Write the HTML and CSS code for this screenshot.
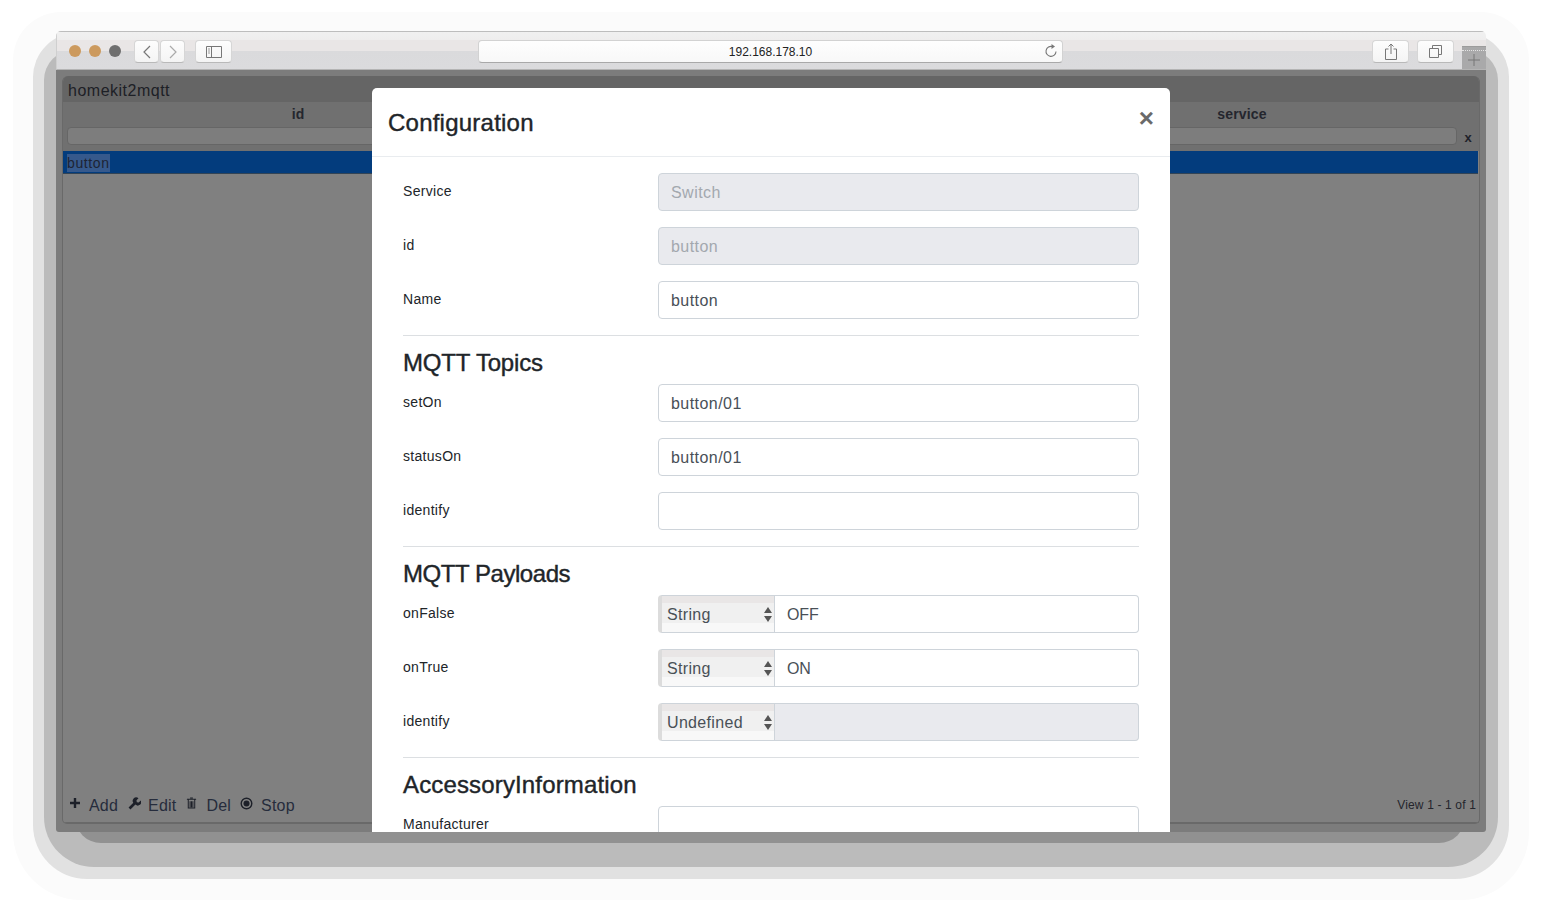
FILE: index.html
```html
<!DOCTYPE html>
<html lang="en">
<head>
<meta charset="utf-8">
<title>homekit2mqtt</title>
<link rel="stylesheet" href="styles.css">
</head>
<body>
<div class="stage">
  <div class="glow glow-a"></div>
  <div class="glow glow-b"></div>
  <div class="glow glow-c"></div>
  <div class="glow glow-d"></div>
  <div class="window">
    <header class="chrome">
      <div class="lights"><span class="light amber"></span><span class="light amber"></span><span class="light grey"></span></div>
      <div class="nav-pair">
        <button class="tool narrow"><svg width="12" height="16" viewBox="0 0 12 16"><path d="M9 2 3 8l6 6" fill="none" stroke="#777" stroke-width="1.2"/></svg></button>
        <button class="tool narrow"><svg width="12" height="16" viewBox="0 0 12 16"><path d="M3 2l6 6-6 6" fill="none" stroke="#aaa" stroke-width="1.2"/></svg></button>
      </div>
      <button class="tool wide sidebar-btn"><svg width="16" height="12" viewBox="0 0 16 12"><path d="M.5.5h15v11H.5zM5.500.5v11" fill="none" stroke="#777"/><path d="M2 3h2M2 5h2M2 7h2" stroke="#999"/></svg></button>
      <div class="address"><span class="url">192.168.178.10</span>
        <svg class="reload" width="14" height="14" viewBox="0 0 14 14"><path d="M8.500 2.600A5 5 0 1 0 12 7.500" fill="none" stroke="#777" stroke-width="1.100"/><path d="M7.500 0v5l3.500-2.500z" fill="#777"/></svg>
      </div>
      <button class="tool wide"><svg width="12" height="17" viewBox="0 0 12 17"><path d="M3.500 6H.5v10.500h11V6H8.500M6 11V1M3.500 3.500 6 1l2.500 2.500" fill="none" stroke="#777"/></svg></button>
      <button class="tool wide tabs-btn"><svg width="13" height="13" viewBox="0 0 13 13"><path d="M.5 3.500h9v9h-9zM3.500 3.500v-3h9v9h-3" fill="none" stroke="#777"/></svg></button>
      <div class="new-tab"><svg width="12" height="12" viewBox="0 0 12 12"><path d="M6 0v12M0 6h12" stroke="#777"/></svg></div>
    </header>

    <main class="viewport">
      <section class="grid-panel">
        <h1 class="grid-title">homekit2mqtt</h1>
        <div class="grid-cols grid-head">
          <div class="col-head">id</div>
          <div class="col-head"></div>
          <div class="col-head">service</div>
        </div>
        <div class="grid-cols grid-filter">
          <div class="filter-cell"><div class="filter-input"></div></div>
          <div class="filter-cell"><div class="filter-input"></div></div>
          <div class="filter-cell last"><div class="filter-input"></div><span class="filter-clear">x</span></div>
        </div>
        <div class="grid-row"><span class="cell-selected">button</span></div>
        <div class="grid-spacer"></div>
        <footer class="pager">
          <div class="actions">
            <span class="action"><svg class="icon-add" width="12" height="12" viewBox="0 0 12 12"><path d="M6 1v10M1 6h10" stroke="#1d2029" stroke-width="2.400"/></svg><span class="action-text">Add</span></span>
            <span class="action"><svg class="icon-edit" width="13" height="13" viewBox="0 0 13 13"><path d="M1.500 11.500 7 6" stroke="#1d2029" stroke-width="2.600"/><path d="M6 6.500A3.300 3.300 0 0 1 10.500 1.200L8.500 3.300l.3 1.900 1.900.3 2-2A3.300 3.300 0 0 1 7.500 7.500z" fill="#1d2029"/></svg><span class="action-text">Edit</span></span>
            <span class="action"><svg class="icon-del" width="11" height="12" viewBox="0 0 11 13"><path d="M4 1h3M.5 2.500h10M2 3v9h7V3M4 4.500V11M5.500 4.500V11M7 4.500V11" fill="none" stroke="#1d2029" stroke-width="1.100"/></svg><span class="action-text">Del</span></span>
            <span class="action"><svg class="icon-stop" width="13" height="13" viewBox="0 0 13 13"><circle cx="6.500" cy="6.500" r="5.300" fill="none" stroke="#1d2029" stroke-width="1.400"/><circle cx="6.500" cy="6.500" r="3" fill="#1d2029"/></svg><span class="action-text">Stop</span></span>
          </div>
          <span class="view-count">View 1 - 1 of 1</span>
        </footer>
      </section>

      <div class="modal">
        <div class="modal-header">
          <h2 class="modal-title">Configuration</h2>
          <span class="modal-close">×</span>
        </div>
        <form class="modal-body">
          <div class="row"><label class="row-label">Service</label><input class="field" value="Switch" disabled></div>
          <div class="row"><label class="row-label">id</label><input class="field" value="button" disabled></div>
          <div class="row"><label class="row-label">Name</label><input class="field" value="button"></div>
          <hr class="rule">
          <h3 class="section topics">MQTT Topics</h3>
          <div class="row"><label class="row-label">setOn</label><input class="field" value="button/01"></div>
          <div class="row"><label class="row-label">statusOn</label><input class="field" value="button/01"></div>
          <div class="row"><label class="row-label">identify</label><input class="field" value=""></div>
          <hr class="rule">
          <h3 class="section payloads">MQTT Payloads</h3>
          <div class="row"><label class="row-label">onFalse</label>
            <div class="combo"><div class="picker"><select class="picker-select"><option>String</option></select><span class="arrows"></span></div><input class="field joined" value="OFF"></div></div>
          <div class="row"><label class="row-label">onTrue</label>
            <div class="combo"><div class="picker"><select class="picker-select"><option>String</option></select><span class="arrows"></span></div><input class="field joined" value="ON"></div></div>
          <div class="row"><label class="row-label">identify</label>
            <div class="combo"><div class="picker"><select class="picker-select"><option>Undefined</option></select><span class="arrows"></span></div><input class="field joined" value="" disabled></div></div>
          <hr class="rule">
          <h3 class="section accessory">AccessoryInformation</h3>
          <div class="row"><label class="row-label">Manufacturer</label><input class="field" value=""></div>
        </form>
      </div>
    </main>
  </div>
</div>
</body>
</html>
```

FILE: styles.css
```css
* { box-sizing: border-box; }
html, body { margin: 0; height: 100%; background: #fff; overflow: hidden; }
body { font-family: "Liberation Sans", Arial, sans-serif; color: #212529; }

.stage { position: relative; width: 1542px; height: 912px; padding: 31px 56px 0; }
.glow { position: absolute; }
.glow-a { left: 13px; top: 12px; width: 1516px; height: 888px; background: #fbfbfb; border-radius: 48px 48px 68px 68px; }
.glow-b { left: 33px; top: 33px; width: 1476px; height: 846px; background: #e1e1e1; border-radius: 44px 44px 54px 54px; }
.glow-c { left: 44px; top: 50px; width: 1454px; height: 817px; background: #bbb; border-radius: 30px 30px 50px 50px; }
.glow-d { left: 75px; top: 700px; width: 1390px; height: 143px; background: #919191; border-radius: 0 0 26px 26px; }

.window { position: relative; width: 1430px; height: 801px; display: flex; flex-direction: column; overflow: hidden; border-radius: 5px 5px 3px 3px; }

.chrome { flex: none; height: 39px; display: flex; align-items: flex-start; padding: 8px 0 0 12px; border-top: 1px solid #bdbdbd; border-left: 1px solid #cfcfcf; border-bottom: 1px solid #b4b4b4; background: linear-gradient(#f0f0f0 0, #eeeded 8px, #e9e6e6 8px, #e9e6e6 19px, #dadadc 19px, #dbdbdd 100%); }
.lights { display: flex; gap: 8px; padding-top: 5px; margin-right: 13px; }
.light { width: 12px; height: 12px; border-radius: 50%; }
.amber { background: #cc9a5e; }
.grey { background: #6f6f6f; }
.nav-pair { display: flex; gap: 1px; margin-right: 10px; }
.tool { display: flex; align-items: center; justify-content: center; height: 23px; padding: 0; border: 1px solid #d6d6d6; border-bottom-color: #b9b9b9; border-radius: 4px; background: linear-gradient(#fdfdfd, #f4f4f4); }
.narrow { width: 25px; }
.wide { width: 37px; }
.sidebar-btn { margin-right: 246px; }
.address { position: relative; width: 585px; height: 23px; margin-right: 309px; display: flex; align-items: center; justify-content: center; border: 1px solid #d2d2d2; border-bottom-color: #a9a9a9; border-radius: 4px; background: linear-gradient(#fefefe, #f8f8f8); }
.url { font-size: 12px; color: #222; }
.reload { position: absolute; right: 4px; top: 3px; }
.tabs-btn { margin-left: 8px; }
.new-tab { position: relative; flex: none; width: 24px; height: 23px; margin: 6px 0 0 8px; padding-top: 4px; display: flex; align-items: center; justify-content: center; background: #a9a9aa; border-top: 1px solid #9c9c9c; }
.new-tab::before { content: ""; position: absolute; left: 0; right: 0; top: 3px; border-top: 1px dotted #e4e4e4; }

.viewport { position: relative; flex: 1; min-height: 0; padding: 6px 6px 0; background: #7c7c7c; }
.grid-panel { height: 748px; display: flex; flex-direction: column; border: 1px solid #696969; border-top: 0; border-radius: 6px 6px 5px 5px; background: #808080; overflow: hidden; }
.grid-title { flex: none; height: 26px; margin: 0 -1px; padding: 6px 6px 0; font-size: 16px; line-height: 18px; font-weight: 400; letter-spacing: .5px; color: #1d2026; background: #656565; }
.grid-cols { display: grid; grid-template-columns: 472px 472px 472px; }
.grid-head { flex: none; height: 25px; background: #707070; }
.col-head { text-align: center; font-size: 14px; font-weight: 700; line-height: 24px; letter-spacing: .15px; color: #24262e; transform: translateX(-1px); }
.grid-filter { flex: none; height: 24px; background: #707070; }
.filter-cell { padding: 0 0 0 4px; }
.filter-cell.last { display: flex; padding: 0; }
.filter-input { flex: 1; height: 18px; background: #7d7d7d; border: 1px solid #666; border-radius: 4px; }
.filter-clear { flex: none; width: 22px; padding-top: 4px; text-align: center; font-size: 13px; line-height: 13px; font-weight: 700; color: #20222a; }
.grid-row { flex: none; height: 23px; margin-right: 1px; padding: 3px 0 0 4px; background: #033c7d; font-size: 14px; line-height: 18px; letter-spacing: .6px; color: #1d2434; border-bottom: 1px solid #345; }
.cell-selected { display: inline-block; background: #36598c; }
.grid-spacer { flex: 1; background: #808080; }
.pager { flex: none; height: 37px; display: flex; justify-content: space-between; align-items: flex-start; padding: 0 3px 0 6px; border-bottom: 1px solid #696969; }
.actions { display: flex; gap: 10px; }
.action { display: flex; align-items: flex-start; }
.action svg { margin-top: 11px; margin-right: 8px; }
.action .icon-edit { margin-right: 7px; }
.action .icon-del { margin-right: 9px; }
.action .icon-stop { margin-right: 8px; margin-left: -1px; }
.action-text { font-size: 16px; line-height: 18px; margin-top: 11px; letter-spacing: .2px; color: #262c3c; }
.view-count { font-size: 12px; line-height: 14px; margin-top: 12px; letter-spacing: .15px; color: #24252c; }

.modal { position: absolute; left: 316px; top: 18px; width: 798px; height: 760px; background: #fff; border-radius: 5px 5px 0 0; }
.modal-header { height: 69px; display: flex; justify-content: space-between; align-items: flex-start; padding: 0 16px; border-bottom: 1px solid #e9ecef; }
.modal-title { margin: 21px 0 0; font-size: 24px; line-height: 28px; font-weight: 400; letter-spacing: .23px; -webkit-text-stroke: .4px #212529; color: #212529; }
.modal-close { margin-top: 16px; font-size: 26px; line-height: 28px; font-weight: 700; color: #6a6a6a; }
.modal-body { display: flex; flex-direction: column; padding: 16px 31px; }
.row { flex: none; display: grid; grid-template-columns: 255px 481px; height: 38px; margin-bottom: 16px; }
.row-label { font-size: 14px; line-height: 20px; padding-top: 8px; letter-spacing: .3px; color: #212529; }
.field { width: 100%; height: 38px; padding: 2px 12px 0; border: 1px solid #ced4da; border-radius: 4px; font: 16px "Liberation Sans", Arial, sans-serif; letter-spacing: .45px; color: #495057; background: #fff; }
.field:disabled { background: #e9eaee; color: #a3a8ae; opacity: 1; -webkit-text-fill-color: #a3a8ae; }
.rule { flex: none; width: 100%; height: 1px; margin: 0; border: 0; background: #dcdfe2; }
.section { flex: none; height: 48px; margin: 0; padding-top: 13px; font-size: 24px; line-height: 28px; font-weight: 400; -webkit-text-stroke: .4px #212529; color: #212529; }
.topics { letter-spacing: -.18px; }
.payloads { letter-spacing: -.45px; }
.accessory { letter-spacing: .15px; }
.combo { display: flex; height: 38px; }
.picker { position: relative; flex: none; width: 117px; height: 38px; }
.picker-select { appearance: none; -webkit-appearance: none; width: 100%; height: 38px; padding: 0 0 0 5px; border: 1px solid #ced4da; border-left: 4px solid #dcdcdc; border-radius: 4px 0 0 4px; font: 16px "Liberation Sans", Arial, sans-serif; letter-spacing: .33px; color: #495057; background: linear-gradient(#e9e6e6 0, #e9e6e6 7px, #f0f0f0 7px, #f0f0f0 27px, #f8f8f8 27px, #f8f8f8 100%); }
.arrows { position: absolute; right: 3px; top: 12px; width: 8px; height: 15px; pointer-events: none; }
.arrows::before, .arrows::after { content: ""; position: absolute; left: 0; border-left: 4px solid transparent; border-right: 4px solid transparent; }
.arrows::before { top: 0; border-bottom: 6px solid #555; }
.arrows::after { bottom: 0; border-top: 6px solid #555; }
.field.joined { flex: 1; width: auto; border-left: 0; border-radius: 0 4px 4px 0; letter-spacing: -.1px; }
```
